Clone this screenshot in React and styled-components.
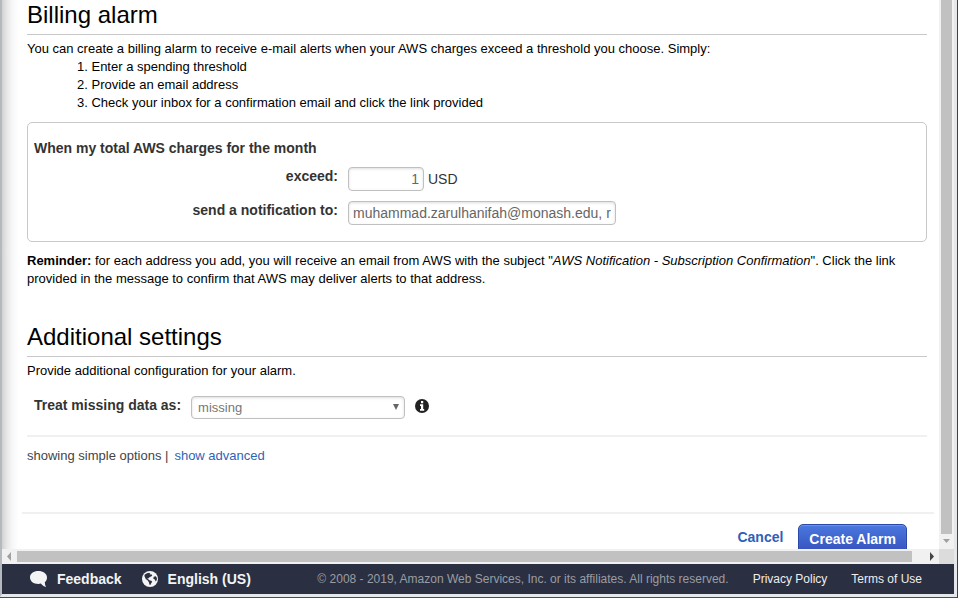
import React from "react";
import styled, { createGlobalStyle } from "styled-components";

const GlobalStyle = createGlobalStyle`
  *, *::before, *::after { box-sizing: border-box; }
  body {
    margin: 0;
    background: #fff;
    color: #000;
    font: 13px/18px "Liberation Sans", Arial, sans-serif;
  }
  input, select, button { font-family: inherit; }
`;

const Frame = styled.div`
  height: 100vh;
  display: flex;
  border-right: 1px solid #3c404a;
  border-bottom: 1px solid #4a4a50;
`;

const Window = styled.div`
  flex: 1;
  min-width: 0;
  display: grid;
  grid-template-columns: minmax(0, 1fr) 15px;
  grid-template-rows: minmax(0, 1fr) 15px 30px;
  border: solid #e4e8eb;
  border-width: 0 3px 3px 2px;
  border-left-color: #b4b9bd;
`;

const Viewport = styled.main`
  overflow: hidden;
  padding: 1px 5px 0 20px;
  background: linear-gradient(to right, #d2d2d2, #e8e8e8 5px, #f8f8f8 11px, #fff 17px);
`;

const Section = styled.section`
  margin: 0 7px ${(p) => p.$gap || 0}px 5px;
`;

const Heading = styled.h2`
  margin: 0 0 5px;
  padding-bottom: 5px;
  border-bottom: 1px solid #c8c8c8;
  font-size: 24px;
  line-height: 28px;
  font-weight: 400;
`;

const Text = styled.p`
  margin: 0;
`;

const Steps = styled.ol`
  margin: 0 0 10px;
  padding-left: 50px;
  list-style-position: inside;
`;

const Panel = styled.div`
  margin-bottom: 10px;
  padding: 16px 6px 6px;
  border: 1px solid #c8c8c8;
  border-radius: 5px;
  color: #333;
  font-size: 14px;
`;

const PanelTitle = styled.h3`
  margin: 0 0 10px;
  font-size: 14px;
  line-height: 18px;
`;

const Field = styled.div`
  display: flex;
  align-items: flex-start;
  gap: 10px;
  height: ${(p) => p.$height || 34}px;
  color: #333;
  font-size: 14px;
`;

const Label = styled.label`
  width: ${(p) => p.$width || "auto"};
  text-align: right;
  font-size: 14px;
  font-weight: 700;
`;

const Control = styled.span`
  display: flex;
  align-items: center;
  gap: 4px;
`;

const TextBox = styled.input`
  width: ${(p) => p.$width}px;
  height: 24px;
  padding: 0 4px;
  border: 1px solid #c0c0c0;
  border-radius: 4px;
  background: #fff;
  box-shadow: inset 0 1px 3px #ddd;
  color: #666;
  font-size: 14px;
  text-align: ${(p) => p.$align || "left"};
`;

const SelectWrap = styled.span`
  display: grid;
  align-items: center;
  width: 214px;
  & > * { grid-area: 1 / 1; }
`;

const Select = styled.select`
  appearance: none;
  width: 100%;
  height: 23px;
  padding: 0 6px;
  border: 1px solid #c0c0c0;
  border-radius: 4px;
  background: #fff;
  box-shadow: inset 0 1px 3px #ddd;
  color: #777;
  font-size: 13px;
`;

const SelectArrow = styled.svg`
  justify-self: end;
  margin: 0 5px 2px 0;
  pointer-events: none;
`;

const InfoButton = styled.button`
  display: flex;
  margin: 3px 0 0;
  padding: 0;
  border: 0;
  background: none;
`;

const SettingRow = styled.div`
  padding: 16px 7px 0;
`;

const Options = styled.div`
  display: flex;
  gap: 6px;
  padding-top: 10px;
  border-top: 2px solid #f0f0f0;
  color: #444;
`;

const Link = styled.a`
  color: #3063b8;
  text-decoration: none;
`;

const Actions = styled.div`
  display: flex;
  justify-content: flex-end;
  align-items: flex-start;
  gap: 15px;
  padding: 10px 27px 0 0;
  border-top: 2px solid #f0f0f0;
`;

const CancelButton = styled.button`
  margin: 4px 0 0;
  padding: 0;
  border: 0;
  background: none;
  color: #2f60b8;
  font-size: 14px;
  line-height: 18px;
  font-weight: 700;
`;

const PrimaryButton = styled.button`
  height: 30px;
  padding: 0 10px;
  border: 1px solid #2948a8;
  border-radius: 5px;
  background: linear-gradient(#4a78df, #3550bd);
  box-shadow: inset 0 1px 1px #6f93e8;
  color: #fff;
  font-size: 14px;
  font-weight: 700;
`;

const VerticalBar = styled.div`
  display: flex;
  flex-direction: column;
  align-items: center;
  background: #f1f1f1;
`;

const HorizontalBar = styled.div`
  display: flex;
  align-items: center;
  background: #f1f1f1;
`;

const VerticalThumb = styled.div`
  flex: 1;
  width: 11px;
  background: #c1c1c1;
`;

const HorizontalThumb = styled.div`
  flex: 1;
  height: 11px;
  margin-right: 12px;
  background: #c1c1c1;
`;

const Corner = styled.div`
  background: #dcdcdc;
`;

const Footer = styled.footer`
  grid-column: 1 / -1;
  display: flex;
  align-items: center;
  justify-content: space-between;
  padding: 0 32px 0 27px;
  background: #2a3042;
  white-space: nowrap;
`;

const FooterGroup = styled.div`
  display: flex;
  align-items: center;
  gap: ${(p) => p.$gap}px;
`;

const FooterButton = styled.button`
  display: flex;
  align-items: center;
  gap: 10px;
  padding: 0;
  border: 0;
  background: none;
  color: #f4f4f4;
  font-size: 14px;
  line-height: 18px;
  font-weight: 700;
`;

const Copyright = styled.span`
  color: #9a9da3;
  font-size: 12px;
`;

const FooterLink = styled.a`
  color: #eee;
  font-size: 12px;
  text-decoration: none;
`;

const ARROWS = {
  left: "M9 3 L5 7.5 L9 12 Z",
  right: "M6 3 L10 7.5 L6 12 Z",
  down: "M4 5 L11 5 L7.5 9 Z",
};

function ScrollArrow({ direction, color }) {
  return (
    <svg width="15" height="15" viewBox="0 0 15 15" fill={color} aria-hidden="true">
      <path d={ARROWS[direction]} />
    </svg>
  );
}

function InfoIcon() {
  return (
    <svg width="14" height="14" viewBox="0 0 14 14" aria-hidden="true">
      <circle cx="7" cy="7" r="7" fill="#222" />
      <path fill="#fff" d="M6 2H8.200V4.200H6ZM5 5.300H8.200V10H9.200V11.700H5V10H6V7H5Z" />
    </svg>
  );
}

function SpeechIcon() {
  return (
    <svg width="18" height="18" viewBox="0 0 18 18" fill="#f4f4f4" aria-hidden="true">
      <path d="M9.300 1C4.600 1 1 3.700 1 7.400s3.600 6.500 8.300 6.500c.9 0 1.800-.1 2.600-.3 1.300 1.700 3.100 2.900 5.100 3.400-.8-1.500-1.200-3-1.200-4.800 1.400-1.200 2.200-2.900 2.200-4.800C18 3.700 14 1 9.300 1Z" />
    </svg>
  );
}

function GlobeIcon() {
  return (
    <svg width="16" height="16" viewBox="0 0 16 16" aria-hidden="true">
      <circle cx="8" cy="8" r="8" fill="#f4f4f4" />
      <path
        fill="#2a3042"
        d="M2.800 3.600 5 2.200 7.200 1.800 8.300 2.800 7.500 3.600 9.200 3.200 10.300 4.300 9.200 5.400 7.800 5.900 6.600 7.200 5 7.800 6.400 8.300 7.300 9.200 9.300 9.700 10.200 10.700 9.200 12.200 8.300 13.900 7.400 13.400 7 11.400 5.800 9.500 3.700 8 2.900 6 2.300 5ZM11.700 5.800 13.800 5.300 14.900 7 14.800 9 13.700 10.500 12.800 8.600 11.300 7.800Z"
      />
    </svg>
  );
}

export default function App() {
  return (
    <>
      <GlobalStyle />
      <Frame>
        <Window>
          <Viewport>
            <Section $gap={35}>
              <Heading>Billing alarm</Heading>
              <Text>
                You can create a billing alarm to receive e-mail alerts when your AWS charges exceed a
                threshold you choose. Simply:
              </Text>
              <Steps>
                <li>Enter a spending threshold</li>
                <li>Provide an email address</li>
                <li>Check your inbox for a confirmation email and click the link provided</li>
              </Steps>
              <Panel>
                <PanelTitle>When my total AWS charges for the month</PanelTitle>
                <Field>
                  <Label htmlFor="amount" $width="304px">exceed:</Label>
                  <Control>
                    <TextBox id="amount" $width={76} $align="right" defaultValue="1" />
                    USD
                  </Control>
                </Field>
                <Field>
                  <Label htmlFor="emails" $width="304px">send a notification to:</Label>
                  <Control>
                    <TextBox
                      id="emails"
                      $width={268}
                      defaultValue="muhammad.zarulhanifah@monash.edu, r"
                    />
                  </Control>
                </Field>
              </Panel>
              <Text>
                <b>Reminder:</b> for each address you add, you will receive an email from AWS with the
                subject "<i>AWS Notification - Subscription Confirmation</i>". Click the link provided
                in the message to confirm that AWS may deliver alerts to that address.
              </Text>
            </Section>

            <Section $gap={47}>
              <Heading>Additional settings</Heading>
              <Text>Provide additional configuration for your alarm.</Text>
              <SettingRow>
                <Field $height={39}>
                  <Label htmlFor="missing-data">Treat missing data as:</Label>
                  <SelectWrap>
                    <Select id="missing-data" defaultValue="missing">
                      <option value="missing">missing</option>
                    </Select>
                    <SelectArrow width="7" height="7" viewBox="0 0 7 7" fill="#666" aria-hidden="true">
                      <path d="M0 1H6L3 7Z" />
                    </SelectArrow>
                  </SelectWrap>
                  <InfoButton type="button" aria-label="About missing data">
                    <InfoIcon />
                  </InfoButton>
                </Field>
              </SettingRow>
              <Options>
                <span>showing simple options |</span>
                <Link href="#advanced">show advanced</Link>
              </Options>
            </Section>

            <Actions>
              <CancelButton type="button">Cancel</CancelButton>
              <PrimaryButton type="button">Create Alarm</PrimaryButton>
            </Actions>
          </Viewport>
          <VerticalBar>
            <VerticalThumb />
            <ScrollArrow direction="down" color="#a0a0a0" />
          </VerticalBar>
          <HorizontalBar>
            <ScrollArrow direction="left" color="#a0a0a0" />
            <HorizontalThumb />
            <ScrollArrow direction="right" color="#444" />
          </HorizontalBar>
          <Corner />
          <Footer>
            <FooterGroup $gap={20}>
              <FooterButton type="button">
                <SpeechIcon />
                Feedback
              </FooterButton>
              <FooterButton type="button">
                <GlobeIcon />
                English (US)
              </FooterButton>
            </FooterGroup>
            <FooterGroup $gap={24}>
              <Copyright>
                © 2008 - 2019, Amazon Web Services, Inc. or its affiliates. All rights reserved.
              </Copyright>
              <FooterLink href="#privacy">Privacy Policy</FooterLink>
              <FooterLink href="#terms">Terms of Use</FooterLink>
            </FooterGroup>
          </Footer>
        </Window>
      </Frame>
    </>
  );
}
